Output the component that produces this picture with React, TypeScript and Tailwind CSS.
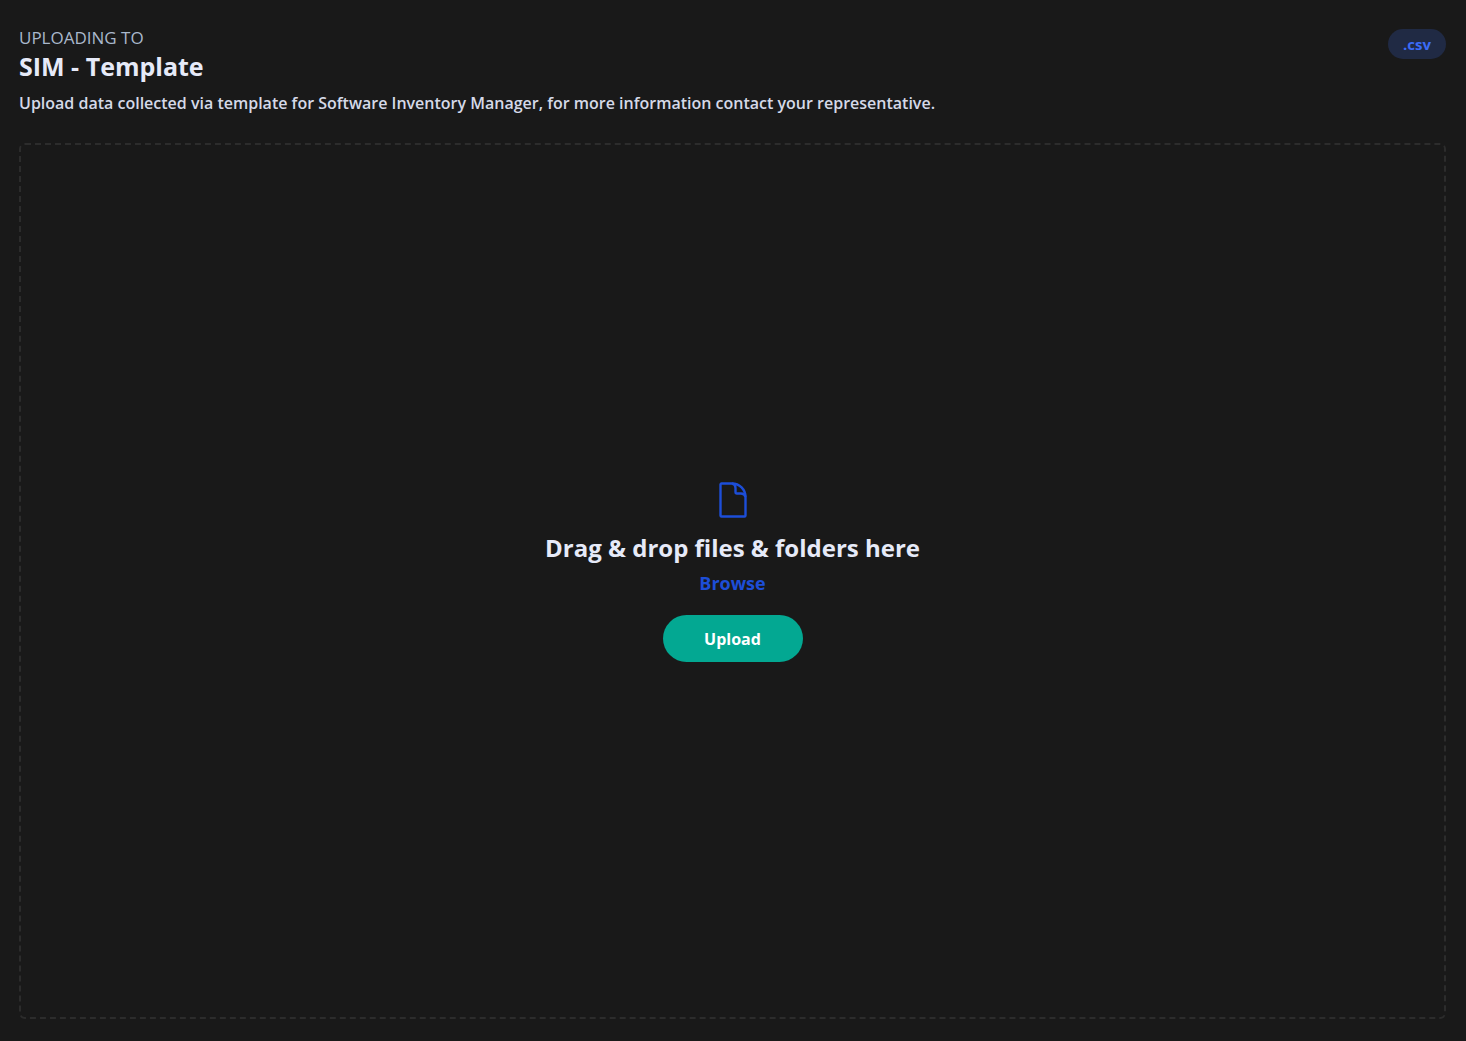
import React, { useRef } from 'react';

const fileTypes = ['.csv'];

function FileIcon() {
  return (
    <svg
      width="28"
      height="36"
      viewBox="0 0 28 36"
      fill="none"
      stroke="currentColor"
      strokeWidth="2.4"
      strokeLinejoin="round"
      aria-hidden="true"
    >
      <path d="M2.5 1.5h10.500c7.500 0 13.500 6 13.500 13.500v18.500a1 1 0 0 1-1 1h-23a1 1 0 0 1-1-1v-31a1 1 0 0 1 1-1z" />
      <path d="M13 1.500c2.500.5 3.500 2 3.500 4.500v4a1.500 1.500 0 0 0 1.500 1.500h4c2.500 0 4 1 4.500 3.500" />
    </svg>
  );
}

export default function App() {
  const inputRef = useRef<HTMLInputElement>(null);

  function onBrowse() {
    inputRef.current?.click();
  }

  return (
    <main className="flex min-h-screen flex-col bg-[#191919] pt-[29px] pr-5 pb-[22px] pl-[19px] font-['Open_Sans',sans-serif] text-[#e6eaf8]">
      <header className="mb-[26px] flex items-start justify-between">
        <div>
          <p className="text-[17px] leading-[18px] text-[#a9b8cc]">UPLOADING TO</p>
          <h1 className="text-[25px] leading-[38px] font-bold">SIM - Template</h1>
          <p className="mt-1 text-base leading-7 font-semibold text-[#d5d9e8]">
            Upload data collected via template for Software Inventory Manager, for more information contact your representative.
          </p>
        </div>
        <ul className="flex gap-2">
          {fileTypes.map(type => (
            <li
              key={type}
              className="rounded-full bg-[#202a44] px-[15px] py-[5px] text-[15px] leading-5 font-bold text-[#3b6cf6]"
            >
              {type}
            </li>
          ))}
        </ul>
      </header>

      <section className="flex flex-1 flex-col items-center justify-center rounded-md border-2 border-dashed border-[#2c2c2c] pb-[18px]">
        <span className="text-[#1d4ed8]">
          <FileIcon />
        </span>
        <h2 className="mt-3 text-2xl leading-9 font-bold">Drag &amp; drop files &amp; folders here</h2>
        <input
          ref={inputRef}
          type="file"
          accept=".csv"
          multiple
          aria-label="Files to upload"
          className="hidden"
        />
        <button type="button" onClick={onBrowse} className="mt-[3px] text-lg leading-7 font-bold text-[#1d4ed8]">
          Browse
        </button>
        <button
          type="button"
          className="mt-[18px] h-[47px] w-[140px] rounded-full bg-[#03a892] text-base font-bold text-white"
        >
          Upload
        </button>
      </section>
    </main>
  );
}
